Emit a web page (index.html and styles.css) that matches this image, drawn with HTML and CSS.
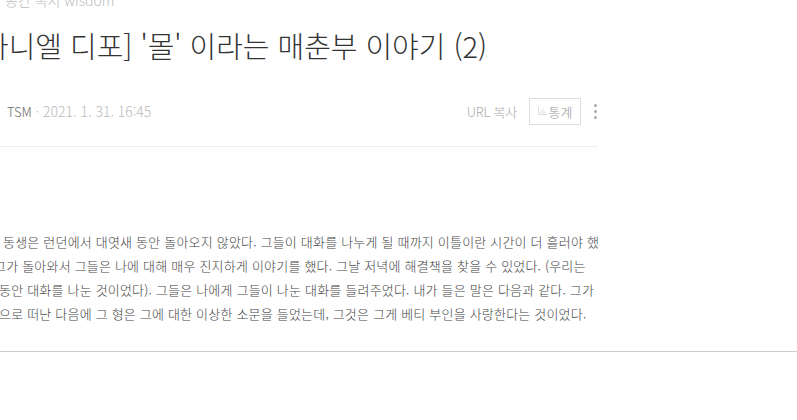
FILE: index.html
```html
<!DOCTYPE html>
<html lang="ko">
<head>
    <meta charset="UTF-8">
    <title>'몰' 이라는 매춘부 이야기 (2)</title>
    <link rel="stylesheet" href="styles.css">
</head>
<body>

<div class="post">
    <div class="post-header">
        <div class="category">공간 독서 wisdom</div>
        <h1 class="title">[다니엘 디포] '몰' 이라는 매춘부 이야기 (2)</h1>
        <div class="meta">
            <div class="info">
                <span class="author">TSM</span>
                <span class="dot">·</span>
                <span class="date">2021. 1. 31. 16:45</span>
            </div>
            <div class="actions">
                <span class="url-copy">URL 복사</span>
                <span class="stats">
                    <svg class="stats-icon" width="9" height="8" viewBox="0 0 9 8">
                        <path d="M.5 0v7.500H9M3 6.500V4M5 6.500V2M7 6.500V4.500" fill="none" stroke="#ddd"/>
                    </svg>
                    통계
                </span>
                <span class="more"><i></i><i></i><i></i></span>
            </div>
        </div>
    </div>

    <div class="content">
        <div class="line line-1">동생은 런던에서 대엿새 동안 돌아오지 않았다. 그들이 대화를 나누게 될 때까지 이틀이란 시간이 더 흘러야 했</div>
        <div class="line line-2">그가 돌아와서 그들은 나에 대해 매우 진지하게 이야기를 했다. 그날 저녁에 해결책을 찾을 수 있었다. (우리는</div>
        <div class="line line-3">동안 대화를 나눈 것이었다). 그들은 나에게 그들이 나눈 대화를 들려주었다. 내가 들은 말은 다음과 같다. 그가</div>
        <div class="line line-4">으로 떠난 다음에 그 형은 그에 대한 이상한 소문을 들었는데, 그것은 그게 베티 부인을 사랑한다는 것이었다.</div>
    </div>
</div>

<div class="divider"></div>

</body>
</html>
```

FILE: styles.css
```css
html, body {
    margin: 0;
    padding: 0;
    background-color: #fff;
    overflow: hidden;
    height: 100%;
}
body {
    font-family: "Noto Sans CJK KR", "Noto Sans", sans-serif;
    color: #666;
}
.post {
    width: 598px;
    height: 351px;
    overflow: hidden;
}
.post-header {
    border-bottom: 1px solid #eee;
    height: 155px;
}
.category {
    margin: -9px 0 0 5px;
    font-size: 14px;
    line-height: 18px;
    color: #bbb;
    font-weight: 300;
}
.title {
    margin: 16px 0 0 -27px;
    font-size: 29px;
    line-height: 40px;
    font-weight: 300;
    color: #333;
    white-space: nowrap;
    letter-spacing: -0.05px;
}
.meta {
    display: flex;
    justify-content: space-between;
    align-items: center;
    margin-top: 33px;
    height: 26px;
}
.info {
    margin-left: 7px;
    font-size: 14px;
    font-weight: 300;
    color: #bbb;
}
.author {
    color: #666;
    font-size: 13px;
}
.actions {
    display: flex;
    align-items: center;
    font-size: 13px;
    font-weight: 300;
    color: #aaa;
}
.url-copy {
    letter-spacing: -0.2px;
}
.stats {
    display: flex;
    align-items: center;
    gap: 2px;
    box-sizing: border-box;
    height: 27px;
    margin-left: 12px;
    padding: 0 7.5px;
    border: 1px solid #ddd;
    color: #999;
}
.more {
    display: flex;
    flex-direction: column;
    gap: 3px;
    margin: 0 0 0 13px;
    width: 4px;
}
.more i {
    display: block;
    width: 3px;
    height: 3px;
    border-radius: 50%;
    background-color: #aaa;
}
.content {
    margin-top: 83px;
    font-size: 13px;
    line-height: 24px;
    font-weight: 300;
    color: #444;
    white-space: nowrap;
    letter-spacing: 0.2px;
}
.line-1 { margin-left: 3px; }
.line-2 { margin-left: -6px; }
.line-3 { margin-left: -1px; }
.line-4 { margin-left: -1px; }
.divider {
    height: 1px;
    background-color: #ccc;
}
```
